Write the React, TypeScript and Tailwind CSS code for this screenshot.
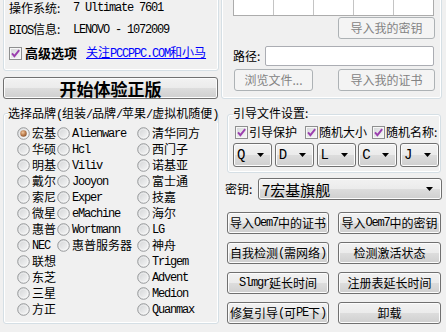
import React from "react";

function M({ children, className = "" }: { children: React.ReactNode; className?: string }) {
  return (
    <span className={`font-['Liberation_Mono',monospace] text-[12px] tracking-[-1.2px] ${className}`}>
      {children}
    </span>
  );
}

function Radio({ checked = false }: { checked?: boolean }) {
  return (
    <svg width="13" height="13" viewBox="0 0 13 13" className="shrink-0">
      <defs>
        <linearGradient id="rgbg" x1="0" y1="0" x2="1" y2="1">
          <stop offset="0" stopColor="#cfd1d3" />
          <stop offset="1" stopColor="#fafafa" />
        </linearGradient>
        <radialGradient id="rgdot" cx="0.4" cy="0.35" r="0.7">
          <stop offset="0" stopColor="#f2c9a0" />
          <stop offset="0.6" stopColor="#b97a4a" />
          <stop offset="1" stopColor="#8a5530" />
        </radialGradient>
      </defs>
      <circle cx="6.5" cy="6.5" r="5.8" fill="url(#rgbg)" stroke="#989a9c" strokeWidth="1" />
      <circle cx="6.5" cy="6.5" r="4.3" fill="none" stroke="#ffffff" strokeOpacity="0.5" strokeWidth="0.8" />
      {checked && <circle cx="6.5" cy="6.5" r="3.2" fill="url(#rgdot)" />}
    </svg>
  );
}

function Check() {
  return (
    <svg width="13" height="13" viewBox="0 0 13 13" className="shrink-0">
      <defs>
        <linearGradient id="cbbg" x1="0" y1="0" x2="1" y2="1">
          <stop offset="0" stopColor="#d6d8da" />
          <stop offset="1" stopColor="#f6f6f6" />
        </linearGradient>
      </defs>
      <rect x="0.5" y="0.5" width="12" height="12" fill="#f7f7f7" stroke="#8e8f8f" />
      <rect x="2" y="2" width="9" height="9" fill="url(#cbbg)" />
      <path d="M3 6.3 L5.4 9.2 L10.2 3.2" fill="none" stroke="#9b3fae" strokeWidth="1.9" />
    </svg>
  );
}

function Btn({
  children,
  disabled = false,
  className = "",
}: {
  children: React.ReactNode;
  disabled?: boolean;
  className?: string;
}) {
  return (
    <div
      className={`flex h-[22px] items-center justify-center whitespace-nowrap rounded-[3px] border text-[12px] leading-none ${
        disabled
          ? "border-[#adb2b5] bg-[#f4f4f4] text-[#838383]"
          : "border-[#707070] bg-[linear-gradient(to_bottom,#f2f2f2_0%,#ebebeb_50%,#dddddd_50%,#cfcfcf_100%)] text-black shadow-[inset_0_0_0_1px_#fcfcfc]"
      } ${className}`}
    >
      {children}
    </div>
  );
}

function Arrow() {
  return (
    <svg width="7" height="4" viewBox="0 0 7 4" className="shrink-0">
      <path d="M0 0 H7 L3.5 4 Z" fill="#000" />
    </svg>
  );
}

function Drop({ letter }: { letter: string }) {
  return (
    <div className="flex h-[24px] w-[39px] items-center justify-between rounded-[3px] border border-[#707070] bg-[linear-gradient(to_bottom,#f2f2f2_0%,#ebebeb_50%,#dddddd_50%,#cfcfcf_100%)] pl-[3px] pr-[7px] shadow-[inset_0_0_0_1px_#fcfcfc]">
      <span className="font-['Liberation_Mono',monospace] text-[14px] leading-none">{letter}</span>
      <Arrow />
    </div>
  );
}

type Cell = { label: React.ReactNode; checked?: boolean } | null;

const rows: [Cell, Cell, Cell][] = [
  [{ label: "宏基", checked: true }, { label: <M>Alienware</M> }, { label: "清华同方" }],
  [{ label: "华硕" }, { label: <M>Hcl</M> }, { label: "西门子" }],
  [{ label: "明基" }, { label: <M>Viliv</M> }, { label: "诺基亚" }],
  [{ label: "戴尔" }, { label: <M>Jooyon</M> }, { label: "富士通" }],
  [{ label: "索尼" }, { label: <M>Exper</M> }, { label: "技嘉" }],
  [{ label: "微星" }, { label: <M>eMachine</M> }, { label: "海尔" }],
  [{ label: "惠普" }, { label: <M>Wortmann</M> }, { label: <M>LG</M> }],
  [{ label: <M>NEC</M> }, { label: "惠普服务器" }, { label: "神舟" }],
  [{ label: "联想" }, null, { label: <M>Trigem</M> }],
  [{ label: "东芝" }, null, { label: <M>Advent</M> }],
  [{ label: "三星" }, null, { label: <M>Medion</M> }],
  [{ label: "方正" }, null, { label: <M>Quanmax</M> }],
];

function RadioCell({ cell }: { cell: Cell }) {
  if (!cell) return <div />;
  return (
    <div className="flex h-[16px] items-center whitespace-nowrap">
      <Radio checked={cell.checked} />
      <span className="ml-[2px] leading-[16px]">{cell.label}</span>
    </div>
  );
}

export default function App() {
  return (
    <div className="flex h-[332px] w-[446px] overflow-hidden bg-[#f0f0f0] font-['Noto_Sans_CJK_SC',sans-serif] text-[12px] text-black">
      {/* Left column */}
      <div className="flex w-[221px] shrink-0 flex-col pl-[3px]">
        {/* System info group */}
        <div className="-mt-[12px] flex h-[83px] w-[216px] flex-col rounded-[3px] border border-[#d5dfe5] pl-[5px] pt-[11px] shadow-[inset_0_0_0_1px_#ffffff]">
          <div className="flex h-[16px] items-center leading-[16px]">
            <span className="w-[64px]">操作系统:</span>
            <M>7 Ultimate 7601</M>
          </div>
          <div className="mt-[6px] flex h-[16px] items-center leading-[16px]">
            <span className="w-[64px]">
              <M>BIOS</M>信息:
            </span>
            <M>LENOVO - 1072009</M>
          </div>
          <div className="mt-[7px] flex h-[16px] items-center leading-[16px]">
            <Check />
            <span className="ml-[3px] text-[13px] font-bold">高级选项</span>
            <span className="ml-[9px] text-[#0000ff] underline">
              关注<M>PCCPPC.COM</M>和小马
            </span>
          </div>
        </div>

        <Btn className="mt-[6px] w-[215px] text-[17px] font-bold">开始体验正版</Btn>

        {/* Brand group */}
        <div className="relative mt-[14px] h-[211px] w-[216px] rounded-[3px] border border-[#d5dfe5] pl-[13px] pt-[11px] shadow-[inset_0_0_0_1px_#ffffff]">
          <span className="absolute left-[4px] top-[-9px] whitespace-nowrap bg-[#f0f0f0] leading-[16px]">
            选择品牌<M>(</M>组装<M>/</M>品牌<M>/</M>苹果<M>/</M>虚拟机随便<M>)</M>
          </span>
          <div className="grid grid-cols-[40px_80px_1fr]">
            {rows.map((r, i) => (
              <React.Fragment key={i}>
                <RadioCell cell={r[0]} />
                <RadioCell cell={r[1]} />
                <RadioCell cell={r[2]} />
              </React.Fragment>
            ))}
          </div>
        </div>
      </div>

      {/* Right column */}
      <div className="flex flex-1 flex-col">
        {/* Key / cert group */}
        <div className="-mt-[12px] flex h-[111px] w-[221px] flex-col rounded-[3px] border border-[#d5dfe5] pl-[11px] pt-[5px] shadow-[inset_0_0_0_1px_#ffffff]">
          <div className="flex h-[22px] w-[201px] border border-[#acacac] bg-white">
            <div className="flex-1 border-r border-[#c4c4c4]" />
            <div className="flex-1 border-r border-[#c4c4c4]" />
            <div className="flex-1 border-r border-[#c4c4c4]" />
            <div className="flex-1 border-r border-[#c4c4c4]" />
            <div className="flex-1" />
          </div>
          <Btn disabled className="ml-[105px] mt-[1px] w-[97px]">
            导入我的密钥
          </Btn>
          <div className="mt-[7px] flex h-[20px] items-center">
            <span className="w-[32px] leading-[16px]">路径:</span>
            <div className="h-[20px] w-[169px] rounded-[2px] border border-[#abadb3] bg-white" />
          </div>
          <div className="mt-[3px] flex items-center">
            <Btn disabled className="ml-[1px] w-[79px]">
              浏览文件...
            </Btn>
            <Btn disabled className="ml-[25px] w-[97px]">
              导入我的证书
            </Btn>
          </div>
        </div>

        {/* Boot file settings */}
        <div className="relative ml-[6px] mt-[15px] flex h-[59px] w-[214px] flex-col rounded-[3px] border border-[#d5dfe5] pl-[5px] pt-[9px] shadow-[inset_0_0_0_1px_#ffffff]">
          <span className="absolute left-[5px] top-[-10px] whitespace-nowrap bg-[#f0f0f0] leading-[16px]">
            引导文件设置:
          </span>
          <div className="ml-[2px] flex h-[16px] items-center whitespace-nowrap leading-[16px]">
            <Check />
            <span className="ml-[1px]">引导保护</span>
            <span className="ml-[8px] flex items-center">
              <Check />
            </span>
            <span className="ml-[1px]">随机大小</span>
            <span className="ml-[5px] flex items-center">
              <Check />
            </span>
            <span className="ml-[1px]">随机名称:</span>
          </div>
          <div className="mt-[3px] flex w-[206px] justify-between">
            <Drop letter="Q" />
            <Drop letter="D" />
            <Drop letter="L" />
            <Drop letter="C" />
            <Drop letter="J" />
          </div>
        </div>

        {/* Key select */}
        <div className="ml-[4px] mt-[5px] flex h-[22px] items-center">
          <span className="w-[33px] leading-[16px]">密钥:</span>
          <div className="flex h-[22px] w-[184px] items-center justify-between rounded-[3px] border border-[#707070] bg-[linear-gradient(to_bottom,#f2f2f2_0%,#ebebeb_50%,#dddddd_50%,#cfcfcf_100%)] pl-[3px] pr-[8px] shadow-[inset_0_0_0_1px_#fcfcfc]">
            <span className="text-[15px] leading-none">7宏基旗舰</span>
            <Arrow />
          </div>
        </div>

        {/* Action buttons */}
        <div className="ml-[6px] mt-[12px] grid grid-cols-[102px_103px] gap-x-[9px] gap-y-[8px]">
          <Btn>
            导入<M>Oem7</M>中的证书
          </Btn>
          <Btn>
            导入<M>Oem7</M>中的密钥
          </Btn>
          <Btn>
            自我检测<M>(</M>需网络<M>)</M>
          </Btn>
          <Btn>检测激活状态</Btn>
          <Btn>
            <M>Slmgr</M>延长时间
          </Btn>
          <Btn>注册表延长时间</Btn>
          <Btn>
            修复引导<M>(</M>可<M>PE</M>下<M>)</M>
          </Btn>
          <Btn>卸载</Btn>
        </div>
      </div>
    </div>
  );
}
